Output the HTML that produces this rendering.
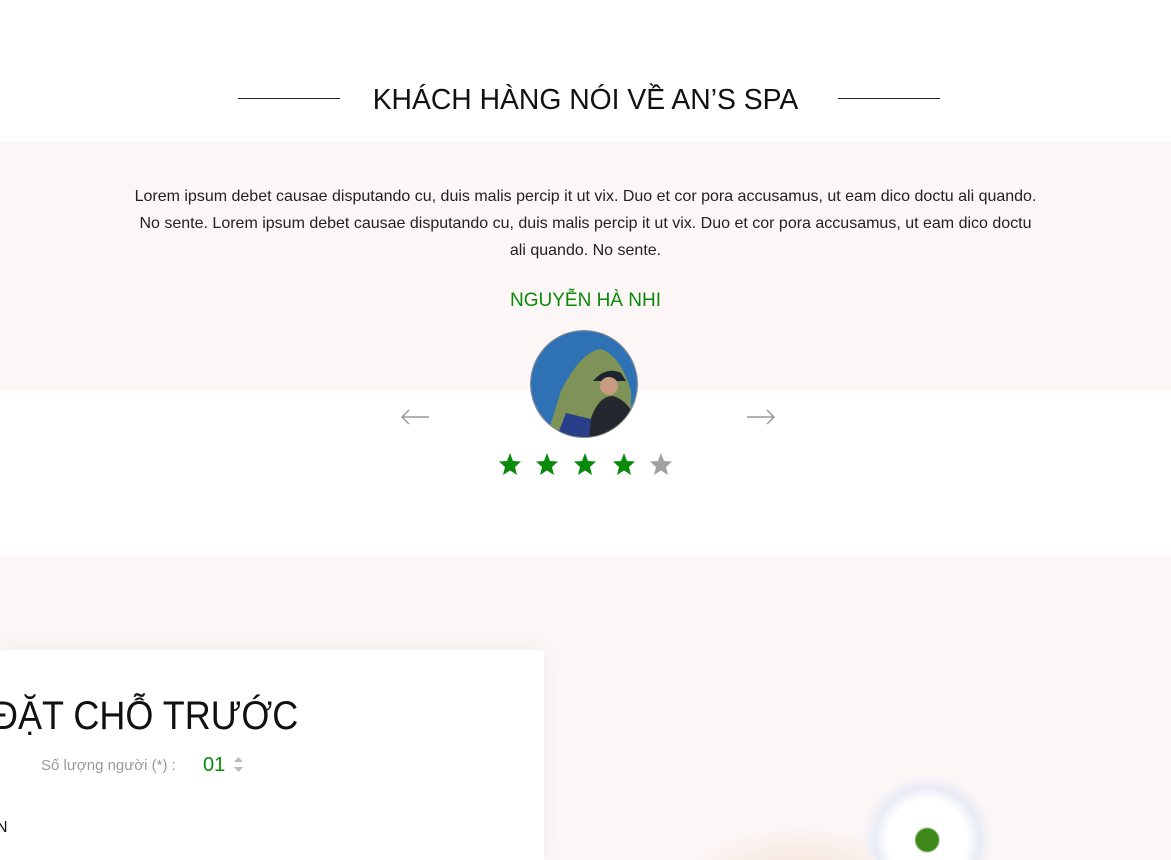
<!DOCTYPE html>
<html><head><meta charset="utf-8"><style>
*{margin:0;padding:0;box-sizing:border-box}
html,body{width:1171px;height:860px;overflow:hidden}
body{background:#fff;font-family:"Liberation Sans",sans-serif;position:relative}
.abs{position:absolute}
.line{position:absolute;top:98px;height:1px;background:#222;width:102px}
h2{position:absolute;top:83px;left:0;width:1171px;text-align:center;font-weight:400;font-size:28.3px;color:#111}
.pink1{top:142px;left:0;width:1171px;height:248px;background:#fcf6f6}
.quote{top:183px;left:100px;width:971px;text-align:center;font-size:16px;line-height:27px;color:#222}
.name{top:290px;left:0;width:1171px;text-align:center;color:#0a8a0a;font-size:19px}
.av{left:530px;top:330px;width:108px;height:108px;border-radius:50%;border:1px solid #888;overflow:hidden}
.pink2{top:556px;left:0;width:1171px;height:304px;background:#fcf6f6;overflow:hidden}
.card{top:650px;left:0;width:544px;height:210px;background:#fff;box-shadow:0 0 20px rgba(0,0,0,.06)}
</style></head><body>
<div class="line" style="left:238px"></div>
<div class="line" style="left:838px"></div>
<h2>KHÁCH HÀNG NÓI VỀ AN’S SPA</h2>
<div class="abs pink1"></div>
<div class="abs quote">Lorem ipsum debet causae disputando cu, duis malis percip it ut vix. Duo et cor pora accusamus, ut eam dico doctu ali quando.<br>No sente. Lorem ipsum debet causae disputando cu, duis malis percip it ut vix. Duo et cor pora accusamus, ut eam dico doctu<br>ali quando. No sente.</div>
<div class="abs name">NGUYỄN HÀ NHI</div>
<div class="abs av"><svg width="108" height="108"><path d="M0 108 L0 0 L108 0 L108 108Z" fill="#2e72b5"/><path d="M15 108 L30 60 Q50 20 70 18 Q90 25 100 60 L100 108Z" fill="#7f9358"/><path d="M62 50 Q75 35 90 42 L95 50Z" fill="#1f2330"/><circle cx="78" cy="55" r="9" fill="#c89a80"/><path d="M55 108 Q62 65 82 65 Q105 72 108 108Z" fill="#25272e"/><path d="M25 108 L35 82 L60 88 L58 108Z" fill="#2a3f8a"/></svg></div>
<svg class="abs" style="left:401px;top:409px" width="30" height="16"><path d="M1 8H28M8 1L1 8L8 15" stroke="#999" stroke-width="1.5" fill="none"/></svg>
<svg class="abs" style="left:746px;top:409px" width="30" height="16"><path d="M1 8H28M21 1L28 8L21 15" stroke="#999" stroke-width="1.5" fill="none"/></svg>
<svg class="abs" style="left:497px;top:452px" width="180" height="26">
<defs><path id="s" d="M12 1L15 9L23 9.5L17 15L19 23L12 18.5L5 23L7 15L1 9.5L9 9Z"/></defs>
<use href="#s" x="1" fill="#0a8a0a"/><use href="#s" x="38" fill="#0a8a0a"/><use href="#s" x="76" fill="#0a8a0a"/><use href="#s" x="115" fill="#0a8a0a"/><use href="#s" x="152" fill="#a0a0a0"/></svg>
<div class="abs pink2">
<div class="abs" style="left:680px;top:270px;width:200px;height:60px;background:radial-gradient(ellipse at 60% 100%,#f2e0d0,transparent 70%)"></div>
<div class="abs" style="left:860px;top:222px;width:140px;height:100px;border-radius:50%;background:radial-gradient(circle at 48% 62%,#3d8a1a 0 11px,#fff 13px 40px,rgba(225,232,245,.7) 52px,transparent 66px)"></div>
</div>
<div class="abs card"></div>
<div class="abs" style="left:-8px;top:694px;font-size:40px;color:#111;transform:scaleX(.9);transform-origin:0 0;white-space:nowrap">ĐẶT CHỖ TRƯỚC</div>
<div class="abs" style="left:41px;top:757px;font-size:15px;color:#999;transform:scaleX(1);transform-origin:0 0">Số lượng người (*) :</div>
<div class="abs" style="left:203px;top:754px;font-size:20px;color:#0a8a0a">01</div>
<svg class="abs" style="left:233px;top:756px" width="12" height="18"><path d="M1 6L5.5 1L10 6Z M1 11L5.5 16L10 11Z" fill="#bbb"/></svg>
<div class="abs" style="left:-4px;top:819px;font-size:16px;color:#111">N</div>
</body></html>
